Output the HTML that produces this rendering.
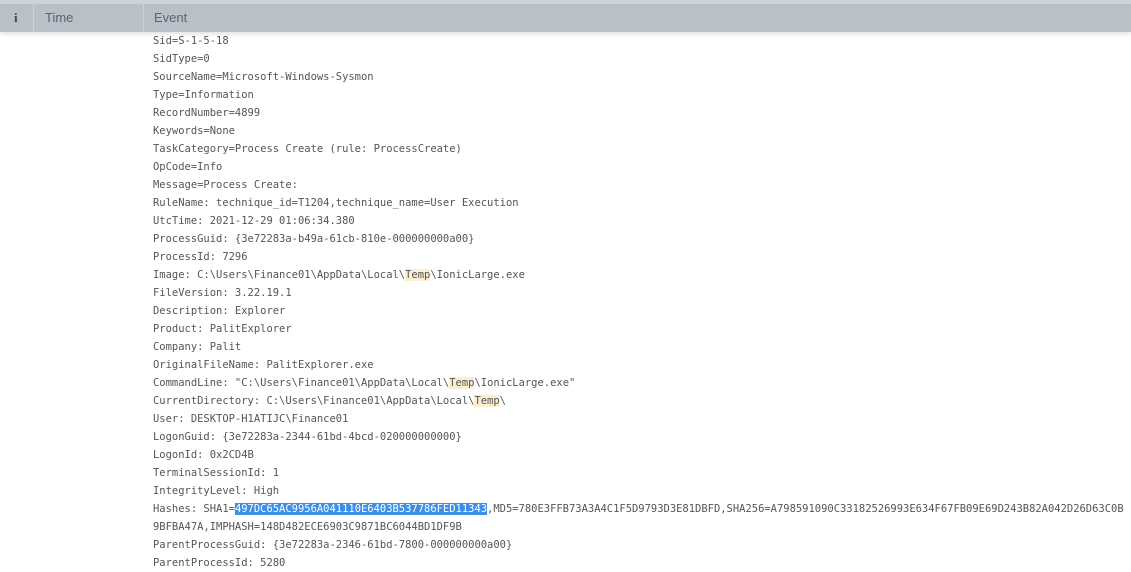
<!DOCTYPE html>
<html><head><meta charset="utf-8"><style>
body{margin:0;width:1131px;height:571px;overflow:hidden;background:#fff;font-family:"Liberation Sans",sans-serif;position:relative}
.top{position:absolute;left:0;top:0;width:1131px;height:4px;background:#d0d3d7}
.hdr{position:absolute;left:0;top:4px;width:1131px;height:28px;background:#b9c0c8;box-shadow:0 2px 4px rgba(0,0,0,0.12);z-index:2;font-size:13px;color:#5a6470}
.hdr span{position:absolute;top:6px}
.div{position:absolute;top:0;width:1px;height:28px;background:#cdd2d8}
.body{position:absolute;left:153px;top:32px;font-family:"DejaVu Sans Mono",monospace;font-size:10.48px;color:#555;white-space:pre;line-height:18px}
.hl{background:#fcefd0}
.sel{background:#3d8ee6;color:#fff}
</style></head><body>
<div class="top"></div>
<div class="hdr"><span style="left:14px;font-weight:bold;font-family:'Liberation Serif',serif;color:#444">i</span><div class="div" style="left:33px"></div><span style="left:45px">Time</span><div class="div" style="left:143px"></div><span style="left:154px">Event</span></div>
<div class="body">Sid=S-1-5-18
SidType=0
SourceName=Microsoft-Windows-Sysmon
Type=Information
RecordNumber=4899
Keywords=None
TaskCategory=Process Create (rule: ProcessCreate)
OpCode=Info
Message=Process Create:
RuleName: technique_id=T1204,technique_name=User Execution
UtcTime: 2021-12-29 01:06:34.380
ProcessGuid: {3e72283a-b49a-61cb-810e-000000000a00}
ProcessId: 7296
Image: C:\Users\Finance01\AppData\Local\<span class="hl">Temp</span>\IonicLarge.exe
FileVersion: 3.22.19.1
Description: Explorer
Product: PalitExplorer
Company: Palit
OriginalFileName: PalitExplorer.exe
CommandLine: "C:\Users\Finance01\AppData\Local\<span class="hl">Temp</span>\IonicLarge.exe"
CurrentDirectory: C:\Users\Finance01\AppData\Local\<span class="hl">Temp</span>\
User: DESKTOP-H1ATIJC\Finance01
LogonGuid: {3e72283a-2344-61bd-4bcd-020000000000}
LogonId: 0x2CD4B
TerminalSessionId: 1
IntegrityLevel: High
Hashes: SHA1=<span class="sel">497DC65AC9956A041110E6403B537786FED11343</span>,MD5=780E3FFB73A3A4C1F5D9793D3E81DBFD,SHA256=A798591090C33182526993E634F67FB09E69D243B82A042D26D63C0B
9BFBA47A,IMPHASH=148D482ECE6903C9871BC6044BD1DF9B
ParentProcessGuid: {3e72283a-2346-61bd-7800-000000000a00}
ParentProcessId: 5280</div>
</body></html>
